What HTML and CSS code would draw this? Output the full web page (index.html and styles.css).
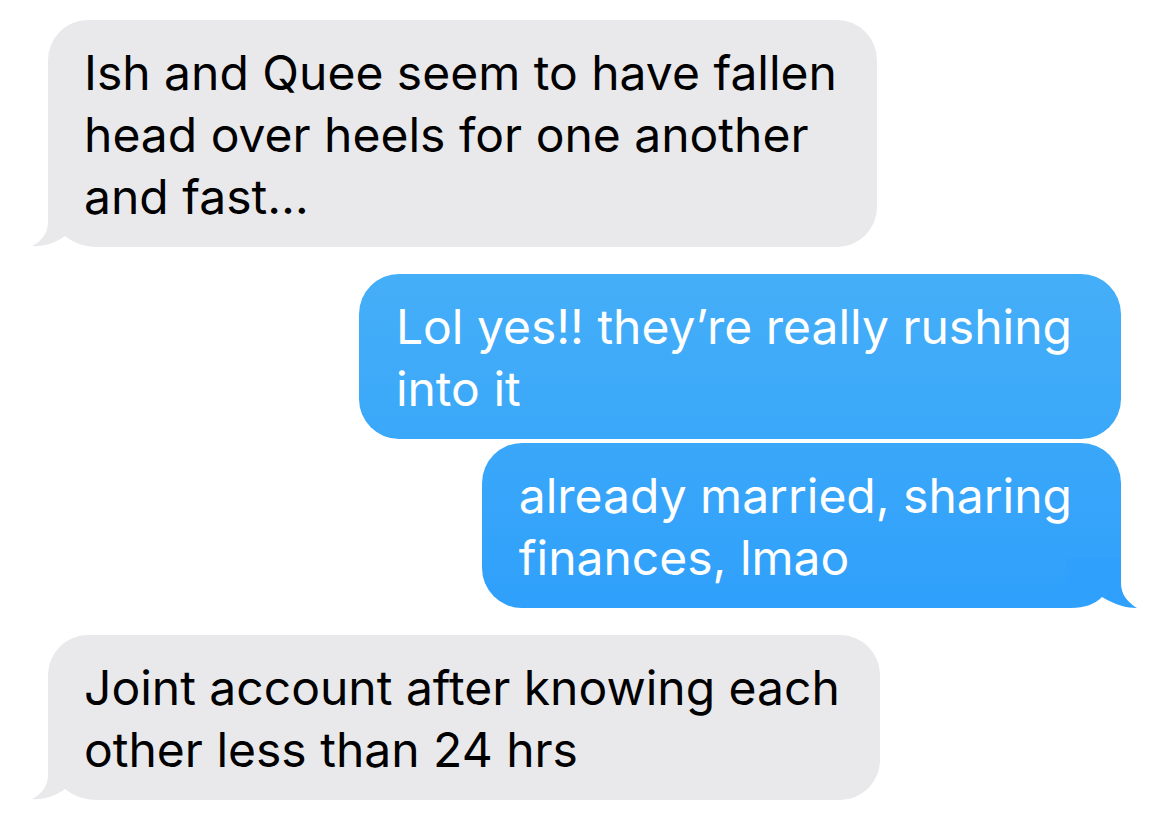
FILE: index.html
```html
<!DOCTYPE html>
<html lang="en">
<head>
<meta charset="utf-8">
<title>Messages</title>
<link rel="stylesheet" href="styles.css">
</head>
<body>
<main class="thread">
  <div class="row row-in">
    <div class="bubble bubble-in">
      <svg class="tail tail-in" viewBox="0 0 70 50" width="70" height="50" aria-hidden="true"><rect width="70" height="50" fill="#fff"/><path d="M16 0 L16 25 C16 36 10 44 0 49 C10 50 22 47 33 39 C42 46 52 50 66 50 L70 50 L70 0 Z" fill="#e9e9eb"/></svg>
      <p class="text">Ish and Quee seem to have fallen<br>head over heels for one another<br>and fast…</p>
    </div>
  </div>
  <div class="row row-out">
    <div class="bubble bubble-out bubble-out-top">
      <p class="text">Lol yes!! they’re really rushing<br>into it</p>
    </div>
  </div>
  <div class="row row-out row-tight">
    <div class="bubble bubble-out bubble-out-bottom">
      <svg class="tail tail-out" viewBox="0 0 70 50" width="70" height="50" aria-hidden="true"><rect width="70" height="50" fill="#fff"/><path d="M16 0 L16 25 C16 36 10 44 0 50 C10 50 22 47 35 39 C42 46 52 50 66 50 L70 50 L70 0 Z" fill="#2fa0fb"/></svg>
      <p class="text">already married, sharing<br>finances, lmao</p>
    </div>
  </div>
  <div class="row row-in">
    <div class="bubble bubble-in">
      <svg class="tail tail-in" viewBox="0 0 70 50" width="70" height="50" aria-hidden="true"><rect width="70" height="50" fill="#fff"/><path d="M16 0 L16 25 C16 36 10 44 0 49 C10 50 22 47 33 39 C42 46 52 50 66 50 L70 50 L70 0 Z" fill="#e9e9eb"/></svg>
      <p class="text">Joint account after knowing each<br>other less than 24 hrs</p>
    </div>
  </div>
</main>
</body>
</html>
```

FILE: styles.css
```css
html, body {
  margin: 0;
  padding: 0;
  background: #ffffff;
}

body {
  font-family: Inter, "Liberation Sans", Arial, sans-serif;
  -webkit-font-smoothing: antialiased;
}

.thread {
  display: flex;
  flex-direction: column;
  padding: 20px 49px 0 48px;
}

.row {
  display: flex;
  margin-top: 27px;
}

.row:first-child {
  margin-top: 0;
}

.row-tight {
  margin-top: 4px;
}

.row-in {
  justify-content: flex-start;
}

.row-out {
  justify-content: flex-end;
}

.bubble {
  position: relative;
  border-radius: 40px;
  white-space: nowrap;
}

.bubble-in {
  background: #e9e9eb;
  color: #000000;
  padding: 22px 40px 19px 36px;
}

.bubble-out {
  color: #ffffff;
  padding: 22px 49px 19px 37px;
}

.bubble-out-top {
  background: linear-gradient(180deg, #45aef8 0%, #3aa8f9 100%);
}

.bubble-out-bottom {
  background: linear-gradient(180deg, #3aa7f9 0%, #2fa0fb 100%);
}

.text {
  position: relative;
  z-index: 1;
  margin: 0;
  font-size: 48px;
  line-height: 62px;
  letter-spacing: 0;
}

.tail {
  position: absolute;
  bottom: 0;
  display: block;
  z-index: 0;
}

.tail-in {
  left: -16px;
}

.tail-out {
  right: -16px;
  transform: scaleX(-1);
}
```
